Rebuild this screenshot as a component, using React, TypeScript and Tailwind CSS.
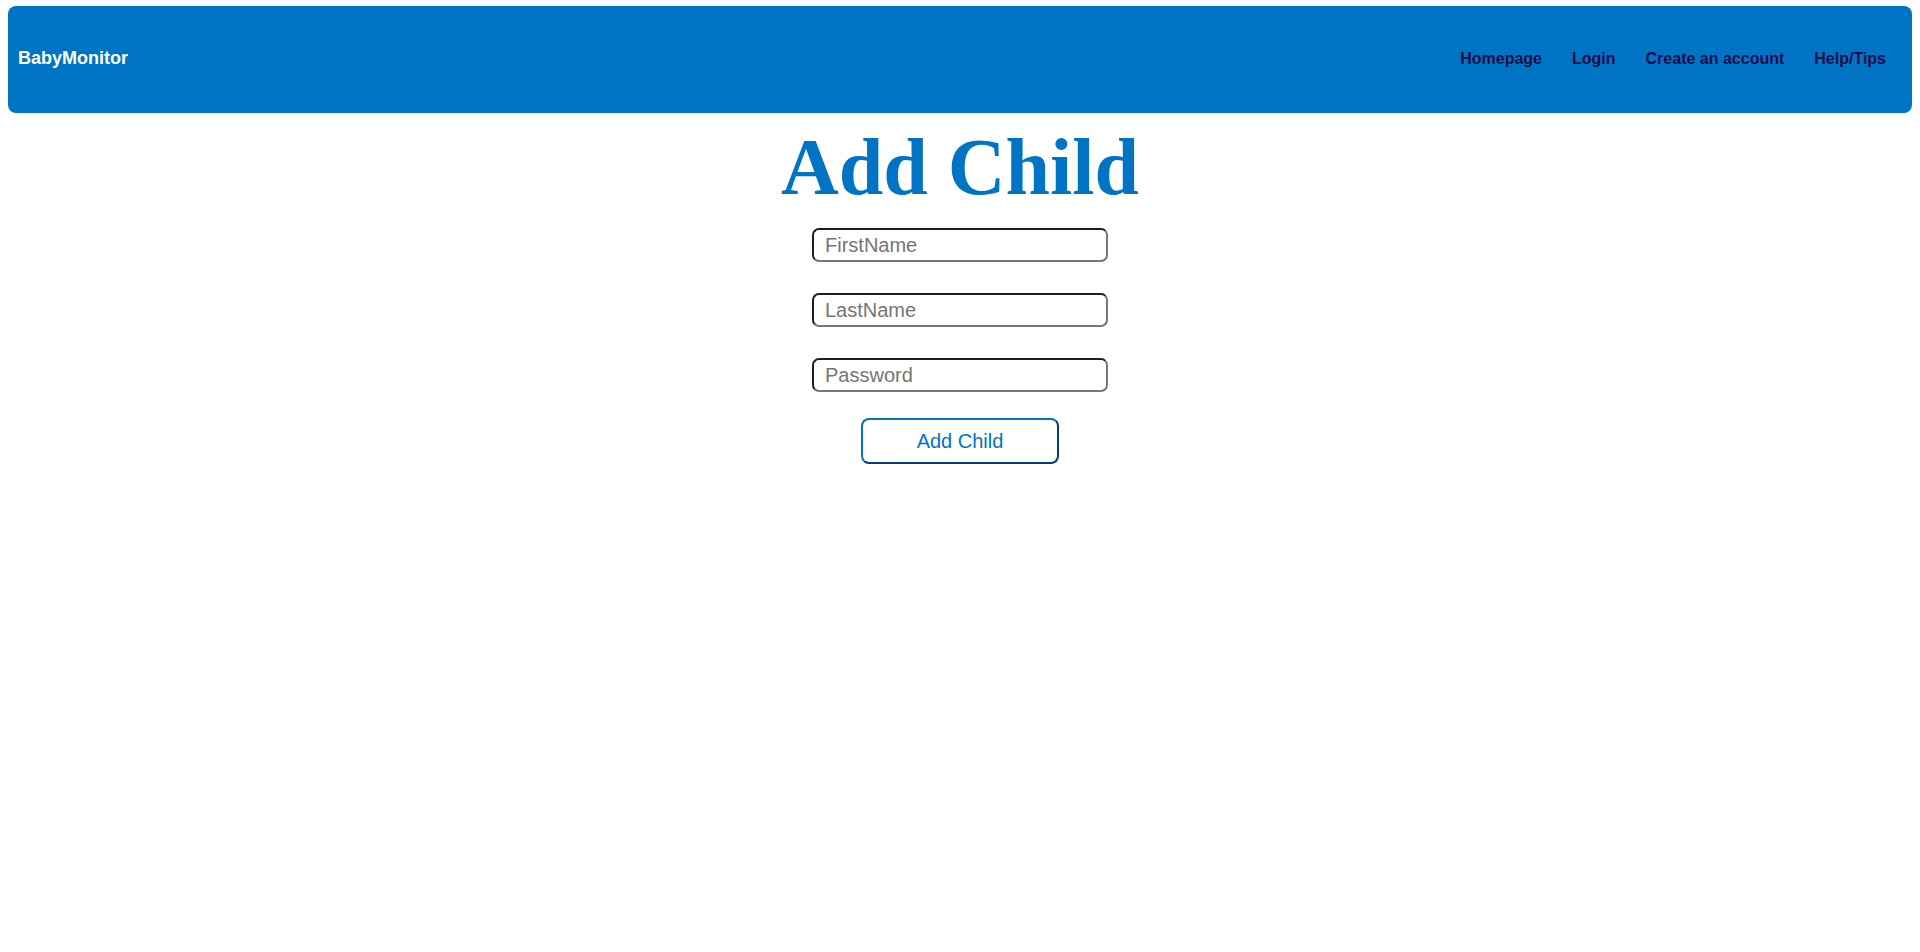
import { useState } from "react";

const NAV_LINKS = ["Homepage", "Login", "Create an account", "Help/Tips"];

const INPUT_CLASS =
  "h-[34px] w-[296px] rounded-[7px] border-2 border-t-[#1e1e1e] border-l-[#1e1e1e] border-b-[#767676] border-r-[#767676] bg-white px-[11px] text-[20px] text-black outline-none placeholder:text-[#757575]";

export default function App() {
  const [firstName, setFirstName] = useState("");
  const [lastName, setLastName] = useState("");
  const [password, setPassword] = useState("");

  return (
    <div className="min-h-[952px] bg-white font-['Liberation_Sans',Arial,sans-serif]">
      <nav className="mx-[8px] mt-[6px] flex h-[107px] items-center justify-between rounded-[8px] bg-[#0074c4] pb-[2px] pl-[10px] pr-[26px]">
        <span className="text-[18px] font-bold text-white">BabyMonitor</span>
        <ul className="flex gap-[30px]">
          {NAV_LINKS.map((link) => (
            <li key={link}>
              <a href="#" className="text-[16px] font-bold text-[#1b0c4a]">
                {link}
              </a>
            </li>
          ))}
        </ul>
      </nav>

      <div className="flex flex-col items-center">
        <h1 className="mt-[14px] font-['Liberation_Serif','Times_New_Roman',serif] text-[80px] font-bold leading-none text-[#0074c4]">
          Add Child
        </h1>
        <form
          className="mt-[21px] flex flex-col items-center"
          onSubmit={(e) => e.preventDefault()}
        >
          <div className="flex flex-col gap-[31px]">
            <input
              className={INPUT_CLASS}
              placeholder="FirstName"
              value={firstName}
              onChange={(e) => setFirstName(e.target.value)}
            />
            <input
              className={INPUT_CLASS}
              placeholder="LastName"
              value={lastName}
              onChange={(e) => setLastName(e.target.value)}
            />
            <input
              className={INPUT_CLASS}
              type="password"
              placeholder="Password"
              value={password}
              onChange={(e) => setPassword(e.target.value)}
            />
          </div>
          <button
            type="submit"
            className="mt-[26px] h-[46px] w-[198px] rounded-[8px] border-2 border-t-[#0074c4] border-l-[#0074c4] border-b-[#003f73] border-r-[#003f73] bg-white text-[20px] text-[#0074c4]"
          >
            Add Child
          </button>
        </form>
      </div>
    </div>
  );
}
